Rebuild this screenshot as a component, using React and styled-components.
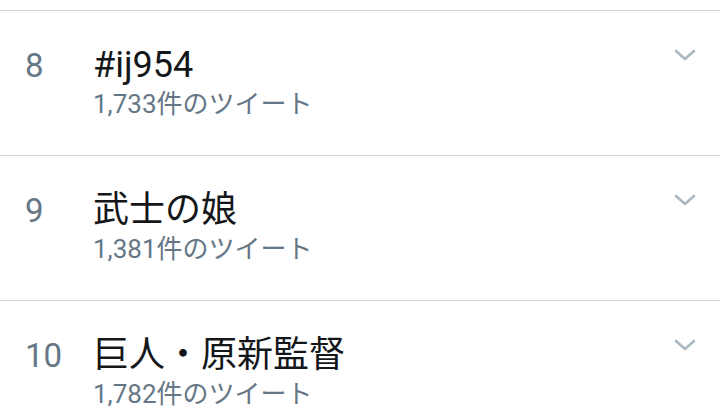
import React from "react";
import styled, { createGlobalStyle } from "styled-components";

const trends = [
  { rank: 8, name: "#ij954", count: "1,733" },
  { rank: 9, name: "武士の娘", count: "1,381" },
  { rank: 10, name: "巨人・原新監督", count: "1,782" },
];

const GlobalStyle = createGlobalStyle`
  html, body {
    margin: 0;
    padding: 0;
    background: #ffffff;
    overflow: hidden;
  }
  body {
    font-family: Roboto, "Noto Sans CJK JP", sans-serif;
  }
`;

const List = styled.div`
  padding-top: 10px;
  width: 720px;
`;

const Row = styled.div`
  display: flex;
  align-items: baseline;
  height: 144px;
  padding: 0 24px 0 25px;
  border-top: 1px solid #ccd6dd;
`;

const Rank = styled.div`
  width: 68px;
  flex-shrink: 0;
  font-size: 33px;
  color: #657786;
`;

const Body = styled.div`
  flex: 1;
  padding-top: 33px;
`;

const Name = styled.div`
  font-size: 36px;
  line-height: 42px;
  color: #14171a;
`;

const Count = styled.div`
  margin-top: 3px;
  font-size: 26px;
  line-height: 30px;
  color: #657786;
`;

const Chevron = styled.svg`
  align-self: flex-start;
  margin-top: 38px;
  width: 22px;
  height: 12px;
  flex-shrink: 0;
`;

export default function App() {
  return (
    <>
      <GlobalStyle />
      <List>
        {trends.map((t) => (
          <Row key={t.rank}>
            <Rank>{t.rank}</Rank>
            <Body>
              <Name>{t.name}</Name>
              <Count>{t.count}件のツイート</Count>
            </Body>
            <Chevron viewBox="0 0 22 12">
              <path
                d="M2 2 L11 10 L20 2"
                fill="none"
                stroke="#aab8c2"
                strokeWidth="2.6"
                strokeLinecap="round"
                strokeLinejoin="round"
              />
            </Chevron>
          </Row>
        ))}
      </List>
    </>
  );
}
